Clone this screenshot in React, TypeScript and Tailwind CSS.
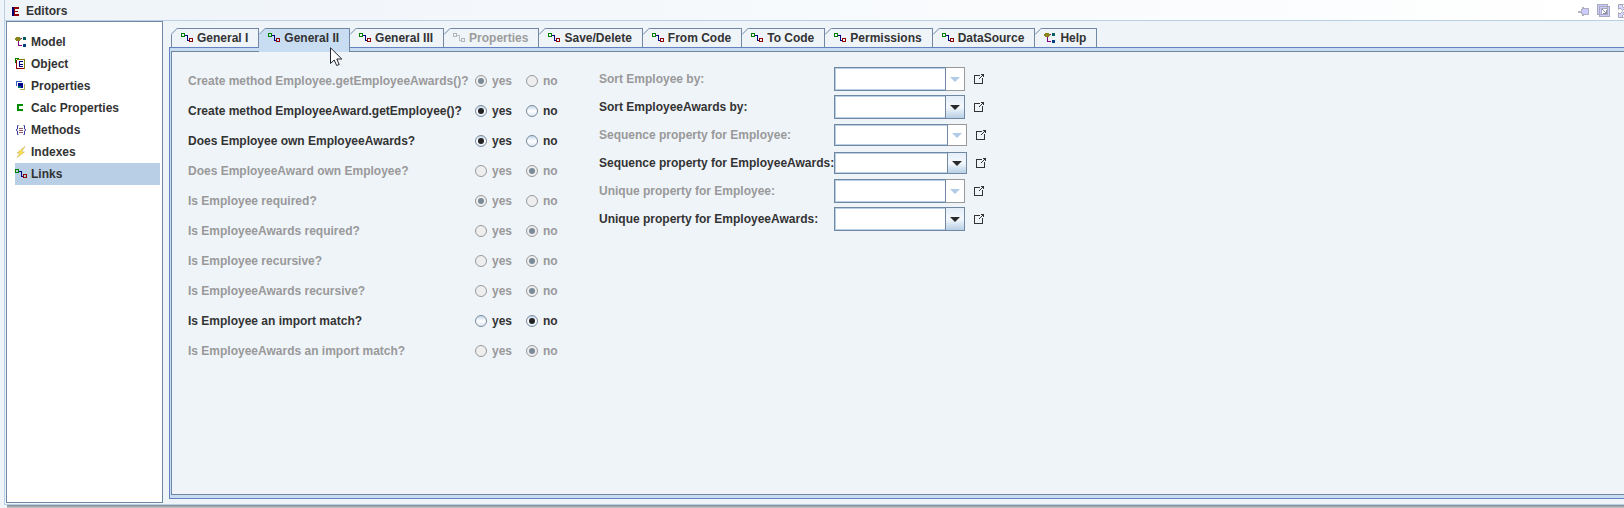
import React, { useState } from "react";

type IconProps = { className?: string };

const base = "h-3 w-3 shrink-0";

function LinkIcon({ muted = false }: { muted?: boolean }) {
  const green = muted ? "#b4b4b4" : "#008000";
  const navy = muted ? "#c0c0c0" : "#000080";
  const red = muted ? "#b4b4b4" : "#900000";
  return (
    <svg className={base} viewBox="0 0 12 12" fill="none" shapeRendering="crispEdges" aria-hidden="true">
      <path d="M.5 1.500h3v3h-3z" stroke={green} />
      <path d="M4 3.500h2.500v5H8" stroke={navy} />
      <path d="M8.500 6.500h3v3h-3z" stroke={red} />
    </svg>
  );
}

function TreeIcon() {
  return (
    <svg className={base} viewBox="0 0 12 12" fill="none" shapeRendering="crispEdges" aria-hidden="true">
      <path d="M1 1h4v1h1v2H5v1H1V4H0V2h1z" fill="#8a8420" />
      <path d="M3.500 5v4.500H7M6 2.500h1" stroke="#800080" />
      <path d="M8 1h3v3H8z" fill="#006060" />
      <path d="M8 8h3v3H8z" fill="#004080" />
    </svg>
  );
}

function ObjectIcon() {
  return (
    <svg className={base} viewBox="0 0 12 12" fill="none" shapeRendering="crispEdges" aria-hidden="true">
      <path d="M.5 5V.5H4" stroke="#008000" />
      <path d="M1.500 2v8.500H10" stroke="#900000" />
      <path d="M2 1.500h7.500v9" stroke="#808000" />
      <path d="M4.500 3v6M4 3.500h4M4 6h4M4 8.500h4" stroke="#000080" />
    </svg>
  );
}

function PropertiesIcon() {
  return (
    <svg className={base} viewBox="0 0 12 12" fill="none" shapeRendering="crispEdges" aria-hidden="true">
      <path d="M1.500 6V1.500H7" stroke="#3060c0" />
      <path d="M3 3h5v5H3z" fill="#000090" />
      <path d="M3 6h3v2H3z" fill="#007070" />
      <path d="M9.500 4v5.500H5" stroke="#b0b060" />
    </svg>
  );
}

function CalcIcon() {
  return (
    <svg className={base} viewBox="0 0 12 12" fill="none" shapeRendering="crispEdges" aria-hidden="true">
      <path d="M8 3H3v5h5" stroke="#008c00" strokeWidth="2" />
    </svg>
  );
}

function MethodsIcon() {
  return (
    <svg className={base} viewBox="0 0 12 12" fill="none" aria-hidden="true">
      <path d="M3.500 1.500H2.500V5L1 6l1.500 1v3.500h1M8.500 1.500h1V5L11 6 9.500 7v3.500h-1" stroke="#3838a0" />
      <path d="M4 4.500h4M4 6.500h4M4 8.500h4" stroke="#906060" />
    </svg>
  );
}

function IndexesIcon() {
  return (
    <svg className={base} viewBox="0 0 12 12" aria-hidden="true">
      <path d="M10 .5 2 7h3l-3 4.500L9.500 6h-3z" fill="#ffe34d" stroke="#c9b45a" strokeWidth=".6" />
    </svg>
  );
}

function OpenIcon() {
  return (
    <svg className="h-3 w-3" viewBox="0 0 12 12" fill="none" shapeRendering="crispEdges" aria-hidden="true">
      <path d="M7 2.500H1.500v8h8V5" stroke="#333" />
      <path d="M8 1h3v3h-1V3H9V2H8zM8 3h1v1H8zM7 4h1v1H7zM6 5h1v1H6z" fill="#333" />
    </svg>
  );
}

function PinIcon() {
  return (
    <svg className="h-3 w-3" viewBox="0 0 12 12" fill="none" shapeRendering="crispEdges" aria-hidden="true">
      <path d="M0 5.500h4v2H0z" fill="#b4b4c6" />
      <path d="M3.500 4.500h1v-2h1v1h5v6h-5v1h-1v-2h-1z" fill="#ccccff" stroke="#b0b0c0" />
    </svg>
  );
}

function RestoreIcon() {
  return (
    <svg className="h-3.5 w-3.5" viewBox="0 0 14 14" fill="none" shapeRendering="crispEdges" aria-hidden="true">
      <path d="M.5.5h10v10H.5zM2.500 2.500h10v10h-10z" fill="#ccccff" stroke="#a9a9bd" />
      <path d="M4 4h6v6H4z" fill="#fff" stroke="#a9a9bd" />
      <path d="m5 5 4 4M9 6v3H6" stroke="#8f8fa8" />
    </svg>
  );
}

function ExpandIcon() {
  return (
    <svg className="h-3.5 w-3.5" viewBox="0 0 14 14" fill="none" aria-hidden="true">
      <path
        d="M.5.5h5L4 2l2.500 2.500-2 2L2 4 .5 5.500zM.5 13.500h5L4 12l2.500-2.500-2-2L2 10 .5 8.500zM13.500.5v5L12 4 9.500 6.500l-2-2L10 2 8.500.5zM13.500 13.500v-5L12 10 9.500 7.500l-2 2L10 12l-1.500 1.500z"
        fill="#d8d8ff"
        stroke="#a9a9bd"
      />
    </svg>
  );
}

function CursorIcon({ className = "" }: IconProps) {
  return (
    <svg className={className} width="13" height="20" viewBox="0 0 13 20" aria-hidden="true">
      <path d="M.5.8v15.700l3.700-3.500 2.500 5.500 2.500-1-2.400-5.500h5z" fill="#fff" stroke="#222230" />
    </svg>
  );
}

const NAV = [
  { label: "Model", icon: <TreeIcon /> },
  { label: "Object", icon: <ObjectIcon /> },
  { label: "Properties", icon: <PropertiesIcon /> },
  { label: "Calc Properties", icon: <CalcIcon /> },
  { label: "Methods", icon: <MethodsIcon /> },
  { label: "Indexes", icon: <IndexesIcon /> },
  { label: "Links", icon: <LinkIcon /> },
];

const TABS = [
  "General I",
  "General II",
  "General III",
  "Properties",
  "Save/Delete",
  "From Code",
  "To Code",
  "Permissions",
  "DataSource",
  "Help",
];

type Question = { text: string; value: "yes" | "no"; enabled: boolean };

const QUESTIONS: Question[] = [
  { text: "Create method Employee.getEmployeeAwards()?", value: "yes", enabled: false },
  { text: "Create method EmployeeAward.getEmployee()?", value: "yes", enabled: true },
  { text: "Does Employee own EmployeeAwards?", value: "yes", enabled: true },
  { text: "Does EmployeeAward own Employee?", value: "no", enabled: false },
  { text: "Is Employee required?", value: "yes", enabled: false },
  { text: "Is EmployeeAwards required?", value: "no", enabled: false },
  { text: "Is Employee recursive?", value: "no", enabled: false },
  { text: "Is EmployeeAwards recursive?", value: "no", enabled: false },
  { text: "Is Employee an import match?", value: "no", enabled: true },
  { text: "Is EmployeeAwards an import match?", value: "no", enabled: false },
];

const PICKERS = [
  { text: "Sort Employee by:", enabled: false, wide: false },
  { text: "Sort EmployeeAwards by:", enabled: true, wide: false },
  { text: "Sequence property for Employee:", enabled: false, wide: true },
  { text: "Sequence property for EmployeeAwards:", enabled: true, wide: true },
  { text: "Unique property for Employee:", enabled: false, wide: false },
  { text: "Unique property for EmployeeAwards:", enabled: true, wide: false },
];

function Tab({ label, selected, first, onSelect }: { label: string; selected: boolean; first: boolean; onSelect: () => void }) {
  const disabled = label === "Properties";
  return (
    <button
      type="button"
      role="tab"
      aria-selected={selected}
      disabled={disabled}
      onClick={onSelect}
      className={`relative flex items-center gap-1 border-t border-r border-[#7088a4] pr-2.5 pl-[9px] whitespace-nowrap ${
        first ? "border-l" : ""
      } ${selected ? "-mb-1 h-6 bg-[#c8ddf2] pb-1.5" : "h-5 pb-0.5"} ${disabled ? "text-[#9c9c9c]" : ""}`}
    >
      <svg className={`absolute -top-px h-[7px] w-[7px] ${first ? "-left-px" : "left-0"}`} viewBox="0 0 7 7" aria-hidden="true">
        <path d="M0 0h7L0 7z" fill="#f0f5f9" />
        <path d="M0 6.500 6.500 0" stroke="#7088a4" />
      </svg>
      {label === "Help" ? <TreeIcon /> : <LinkIcon muted={disabled} />}
      {label}
      {selected && <CursorIcon className="absolute top-[18px] left-[71px] z-10" />}
    </button>
  );
}

function RadioRow({ item, index }: { item: Question; index: number }) {
  const [value, setValue] = useState(item.value);
  return (
    <div role="radiogroup" aria-label={item.text} className={`flex h-[30px] items-center ${item.enabled ? "" : "text-[#999]"}`}>
      <span className="w-[287px] shrink-0 whitespace-nowrap">{item.text}</span>
      {(["yes", "no"] as const).map((v) => (
        <label key={v} className={`flex shrink-0 items-center gap-[5px] ${v === "yes" ? "w-[51px]" : ""}`}>
          <input
            type="radio"
            name={`question-${index}`}
            checked={value === v}
            disabled={!item.enabled}
            onChange={() => setValue(v)}
            className="grid h-3 w-3 shrink-0 appearance-none place-items-center rounded-full border border-[#7a8a99] bg-linear-to-b from-[#c4d8ec] via-white to-[#dce8f4] before:hidden before:h-1.5 before:w-1.5 before:rounded-full before:bg-[#222] checked:before:block disabled:border-[#999] disabled:from-[#eeeeee] disabled:via-[#eeeeee] disabled:to-[#eeeeee] disabled:before:bg-[#7a8a99]"
          />
          {v}
        </label>
      ))}
    </div>
  );
}

function PickerRow({ item, index }: { item: (typeof PICKERS)[number]; index: number }) {
  const id = `picker-${index}`;
  return (
    <div className="flex h-7 items-center">
      <label htmlFor={id} className={`w-[235px] shrink-0 whitespace-nowrap ${item.enabled ? "" : "text-[#999]"}`}>
        {item.text}
      </label>
      <div className={`relative ${item.wide ? "h-[22px] w-[133px]" : "h-6 w-[131px]"}`}>
        <select
          id={id}
          disabled={!item.enabled}
          className="block h-full w-full appearance-none border border-[#7088a4] bg-white pr-6 pl-1 opacity-100 inset-ring inset-ring-[#b8cfe5]"
        >
          <option></option>
        </select>
        <span
          className={`pointer-events-none absolute inset-y-0 right-0 flex w-5 items-center justify-center border border-l ${
            item.enabled
              ? "border-[#7088a4] bg-linear-to-b from-[#e4eef8] via-[#f4f8fc] to-[#b8cfe5]"
              : "border-[#999] border-l-[#7088a4] bg-white"
          }`}
        >
          <svg className="h-[5px] w-2.5" viewBox="0 0 10 5" aria-hidden="true">
            <path d="M0 0h10L5 5z" fill={item.enabled ? "#2a2a2a" : "#b0cbe6"} />
          </svg>
        </span>
      </div>
      <button type="button" aria-label={`Open ${item.text}`} className="ml-2">
        <OpenIcon />
      </button>
    </div>
  );
}

export default function App() {
  const [nav, setNav] = useState("Links");
  const [tab, setTab] = useState("General II");
  return (
    <div className="flex h-screen flex-col overflow-hidden bg-[#eff4f9] pl-1 font-['Liberation_Sans',Arial,sans-serif] text-xs font-bold text-[#333]">
      <div className="flex min-h-0 flex-1 flex-col border-b border-l border-[#b8cfe5]">
        <header className="flex h-[21px] shrink-0 items-center border-b border-[#b8cfe5] bg-linear-to-r from-[#eff4f9] to-white pt-0.5 pl-[7px]">
          <svg className="h-2.5 w-2.5" viewBox="0 0 10 10" shapeRendering="crispEdges" aria-hidden="true">
            <path d="M0 1h3v9H0z" fill="#000070" />
            <path d="M2 1h5v2H3v2h3v1H3v2h4v2H2z" fill="#900000" />
          </svg>
          <h1 className="ml-1">Editors</h1>
          <div className="-mr-2 ml-auto flex shrink-0 items-center gap-[7px]">
            <button type="button" aria-label="Pin"><PinIcon /></button>
            <button type="button" aria-label="Restore"><RestoreIcon /></button>
            <button type="button" aria-label="Maximize"><ExpandIcon /></button>
          </div>
        </header>
        <div className="flex min-h-0 flex-1 pb-px pl-px">
          <nav className="w-[157px] shrink-0 border border-[#7088a4] bg-white pt-[9px] pr-0.5 pl-2">
            {NAV.map((n) => (
              <button
                key={n.label}
                type="button"
                aria-current={nav === n.label ? "page" : undefined}
                onClick={() => setNav(n.label)}
                className={`flex h-[22px] w-full items-center gap-1 ${nav === n.label ? "bg-[#b8cfe5]" : ""}`}
              >
                {n.icon}
                {n.label}
              </button>
            ))}
          </nav>
          <main className="flex min-w-0 flex-1 flex-col pt-[7px] pb-1 pl-1.5">
            <div role="tablist" className="relative z-10 flex h-[19px] pl-0.5">
              {TABS.map((t, i) => (
                <Tab key={t} label={t} first={i === 0} selected={tab === t} onSelect={() => setTab(t)} />
              ))}
            </div>
            <div className="flex min-h-0 flex-1 border border-r-0 border-[#6382bf] bg-[#c8ddf2] pt-[3px] pb-[3px] pl-px">
              <section
                role="tabpanel"
                className="flex min-w-0 flex-1 gap-10 border border-r-0 border-[#7088a4] bg-[#eff4f9] pt-[13px] pl-4"
              >
                <div className="w-[371px] shrink-0 pt-px">
                  {QUESTIONS.map((q, i) => (
                    <RadioRow key={q.text} item={q} index={i} />
                  ))}
                </div>
                <div>
                  {PICKERS.map((p, i) => (
                    <PickerRow key={p.text} item={p} index={i} />
                  ))}
                </div>
              </section>
            </div>
          </main>
        </div>
      </div>
      <div className="ml-[3px] h-[3px] shrink-0 bg-linear-to-b from-[#808890] to-[#c4c8cc]" />
    </div>
  );
}
